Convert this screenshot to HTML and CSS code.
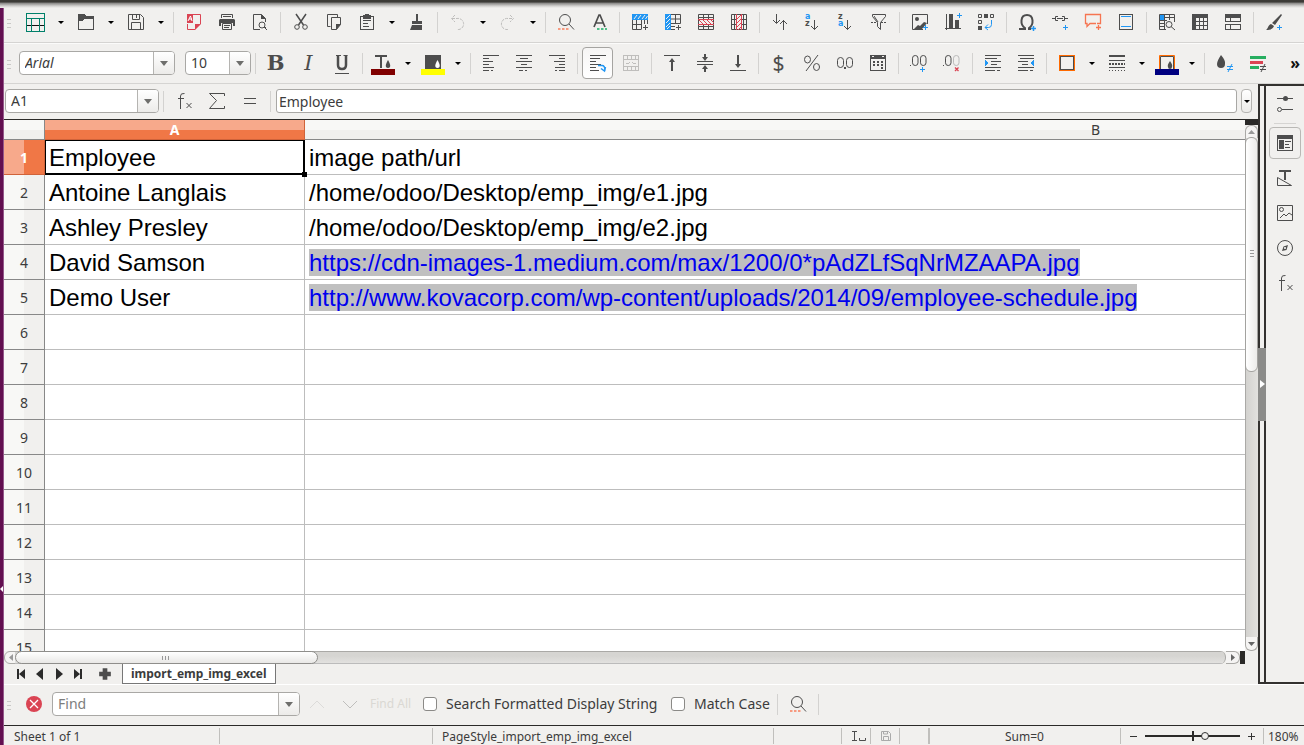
FILE: index.html
```html
<!DOCTYPE html>
<html lang="en">
<head>
<meta charset="utf-8">
<title>import_emp_img_excel</title>
<link rel="stylesheet" href="styles.css">
</head>
<body>
<div class="app">
  <div class="window-shadow"></div>
  <svg class="launcher-mark" viewBox="0 0 4 8"><path d="M4 0v8L0 4z"/></svg>

  <div class="toolbar standard" role="toolbar" aria-label="Standard">
    <span class="grip"></span>
    <span class="split"><button class="tool" aria-label="New"><svg class="icon crisp" viewBox="0 0 16 16"><path d="M-2 11.500H17" stroke="#111"/><path class="teal" d="M-1.500-.5h18v18h-18zM-2 4.500H17M3.500 5v12M11.500 5v12"/></svg></button><button class="caret" aria-label="New options"></button></span>
    <span class="split"><button class="tool" aria-label="Open"><svg class="icon crisp" viewBox="0 0 16 16"><path d="M.5 2v13.500h15v-11h-15"/><path class="solid" d="M0 0h7l1 2h8v3H6L4 7H0z"/></svg></button><button class="caret" aria-label="Open options"></button></span>
    <span class="split"><button class="tool" aria-label="Save"><svg class="icon" viewBox="0 0 16 16"><path d="M.5.5h12l3 3v12H.5zM4.500.5v5h7v-5M8.500 1v3M3.500 15.500v-7h9v7"/></svg></button><button class="caret" aria-label="Save options"></button></span>
    <span class="sep"></span>
    <button class="tool" aria-label="Export PDF"><svg class="icon" viewBox="0 0 16 16"><path d="M1.500 10v5.500H9M7 .5h7.500V10" stroke="#da4453"/><path d="M1 0h6v9H1zM9 16v-6h6z" fill="#da4453" stroke="none"/><path d="M2 7l2.500-5L6 7M3 5h3" stroke="#fff"/></svg></button>
    <button class="tool" aria-label="Print"><svg class="icon" viewBox="0 0 16 16"><path d="M2.500 4V.5h11V4M4 2.500h8"/><path class="solid" d="M1 5h14l1 1v6h-2V9H2v3H0V6z"/><path d="M3.500 9.500h9v6h-9zM5 11.500h6M5 13.500h5"/></svg></button>
    <button class="tool" aria-label="Print Preview"><svg class="icon" viewBox="0 0 16 16"><path d="M8 15.500H1.500V.5h8l4 4V8M13.500 13v2"/><path class="solid" d="M9 0v5h5z"/><circle cx="10" cy="11" r="3"/><path d="M12 13l3 3"/></svg></button>
    <span class="sep"></span>
    <button class="tool" aria-label="Cut"><svg class="icon" viewBox="0 0 16 16"><path d="M3 0l7.500 11M13 0L5.500 11" stroke-width="1.500"/><circle cx="4" cy="13" r="2.300"/><circle cx="12" cy="13" r="2.300"/></svg></button>
    <button class="tool" aria-label="Copy"><svg class="icon" viewBox="0 0 16 16"><path d="M4.500 12.500h-3V.5h10v3M5.500 3.500h9v7l-4 5h-5z"/><path class="solid" d="M10 16v-6h5z"/></svg></button>
    <span class="split"><button class="tool" aria-label="Paste"><svg class="icon crisp" viewBox="0 0 16 16"><path d="M1.500 2.500h13v13h-13zM4 6.500h8M4 9.500h5M4 12.500h6"/><path class="solid" d="M4 1h2V0h4v1h2v4H4z"/></svg></button><button class="caret" aria-label="Paste options"></button></span>
    <button class="tool" aria-label="Clone Formatting"><svg class="icon" viewBox="0 0 16 16"><path class="solid" d="M7 0h2v7h4v3H3V7h4zM3 11h10v5H1z"/></svg></button>
    <span class="sep"></span>
    <span class="split"><button class="tool faded" aria-label="Undo"><svg class="icon" viewBox="0 0 16 16"><path d="M2 4.500h5a5.500 5.500 0 0 1 2 11H7M5 1L1.500 4.500 5 8" stroke-dasharray="3 1"/></svg></button><button class="caret" aria-label="Undo history"></button></span>
    <span class="split"><button class="tool faded" aria-label="Redo"><svg class="icon" viewBox="0 0 16 16"><path d="M12 4.500H8a5.500 5.500 0 0 0-2 11h2M10 1l3.500 3.500L10 8" stroke-dasharray="3 1"/></svg></button><button class="caret" aria-label="Redo history"></button></span>
    <span class="sep"></span>
    <button class="tool" aria-label="Find and Replace"><svg class="icon" viewBox="0 0 16 16"><circle cx="7" cy="6" r="5.500"/><path d="M11 10l5 5.500"/><path class="salmon" d="M0 15h11" stroke-dasharray="2.500 1.500" stroke-width="2"/></svg></button>
    <button class="tool" aria-label="Spelling"><svg class="icon" viewBox="0 0 16 16"><path d="M3 13L8 1h1l5 12M5 9h7" stroke-width="1.700"/><path d="M6 15h10" stroke="#4fbf87" stroke-dasharray="2.500 1.500" stroke-width="2"/></svg></button>
    <span class="sep"></span>
    <button class="tool" aria-label="Insert Row"><svg class="icon" viewBox="0 0 16 16"><path d="M.5 6v9.500h9M.5 10.500h9M4.500 6v9M9.500 6v9M12.500 6v4M15.500 6v4M11 13.500h5M13.500 11v5"/><path fill="#2196f3" stroke="none" d="M0 0h16v6H0z"/><path d="M2 5l3-4M6 5l3-4M10 5l3-4M13.500 5l2-3" stroke="#f1f0ee"/></svg></button>
    <button class="tool" aria-label="Insert Column"><svg class="icon" viewBox="0 0 16 16"><path d="M6 .5h9.500v9H6M6 5h9M10.500 1v8M6 12.500h4M6 15.500h4M11 13.500h5M13.500 11v5"/><path fill="#2196f3" stroke="none" d="M0 0h6v16H0z"/><path d="M1 5l4-4M1 9l4-4M1 13l4-4M2 15l3-3" stroke="#f1f0ee"/></svg></button>
    <button class="tool" aria-label="Delete Row"><svg class="icon" viewBox="0 0 16 16"><path d="M.5.5h15v15H.5zM0 3.500h16M0 12.500h16M5.500 0v5M10.500 0v5M5.500 11v5M10.500 11v5"/><path d="M0 5.500h16M0 10.500h16M1 6l4 4M5 6l4 4M9 6l4 4M13 6l3 3" stroke="#da4453"/></svg></button>
    <button class="tool" aria-label="Delete Column"><svg class="icon" viewBox="0 0 16 16"><path d="M.5.5h15v15H.5zM3.500 0v16M12.500 0v16M0 5.500h5M0 10.500h5M11 5.500h5M11 10.500h5"/><path d="M5.500 0v16M10.500 0v16M6 5l4-4M6 9l4-4M6 13l4-4M7 16l3-3" stroke="#da4453"/></svg></button>
    <span class="sep"></span>
    <button class="tool" aria-label="Sort"><svg class="icon" viewBox="0 0 16 16"><path d="M4.500 0v9M1 6l3.500 3.500L8 6M11.500 16V6M8 10l3.500-3.500L15 10"/></svg></button>
    <button class="tool" aria-label="Sort Ascending"><svg class="icon" viewBox="0 0 16 16"><text class="mini azure" x="0" y="5">a</text><text class="mini" x="0" y="12">z</text><path d="M9.500 6v9.500M6 12l3.500 3.500L13 12"/></svg></button>
    <button class="tool" aria-label="Sort Descending"><svg class="icon" viewBox="0 0 16 16"><text class="mini" x="0" y="5">z</text><text class="mini azure" x="0" y="12">a</text><path d="M9.500 6v9.500M6 12l3.500 3.500L13 12"/></svg></button>
    <button class="tool" aria-label="AutoFilter"><svg class="icon" viewBox="0 0 16 16"><path d="M1.500.5h13v2l-5 6v7l-3-3v-4l-5-6zM3 2l4 6"/><path d="M0 8.500h5M10 8.500h6" stroke-dasharray="2 1"/></svg></button>
    <span class="sep"></span>
    <button class="tool" aria-label="Insert Image"><svg class="icon" viewBox="0 0 16 16"><path d="M11 15.500H.5V.5h15V10"/><circle class="solid" cx="5" cy="5" r="2"/><path class="solid" d="M2 15l4-4 2 1 4-4 3 1-5 6z"/><path class="blue" d="M11 13.500h5M13.500 11v5"/></svg></button>
    <button class="tool" aria-label="Insert Chart"><svg class="icon crisp" viewBox="0 0 16 16"><path d="M0 14.500h16M1.500 0v16"/><path class="solid" d="M4 0h4v15H4zM10 6h4v9h-4z"/><path class="blue" d="M12 1.500h5M14.500-1v5"/></svg></button>
    <button class="tool" aria-label="Pivot Table"><svg class="icon" viewBox="0 0 16 16"><path d="M.5.5h3v3h-3zM12.500.5h3v3h-3zM.5 6.500h3v3h-3z"/><path class="solid" d="M6 0h4v4H6zM0 12h4v4H0z"/><path class="blue" d="M13.500 6v4.500q0 3-3 3H7M10 10.500l-3 3 3 2.500"/></svg></button>
    <span class="sep"></span>
    <button class="tool" aria-label="Special Character"><svg class="icon" viewBox="0 0 16 16"><path d="M0 15h6v-1C1 11 1 1 8 1s7 10 2 13v1h2" stroke-width="2"/><path class="blue" d="M12 14.500h5M14.500 12v5" stroke-width="1.500"/></svg></button>
    <button class="tool" aria-label="Hyperlink"><svg class="icon" viewBox="0 0 16 16"><path d="M0 4.500h3M6 2.500H3.500v4H6M5 4.500h6M10 2.500h2.500v4H10M13 4.500h3"/><path class="blue" d="M11 13.500h5M13.500 11v5"/></svg></button>
    <button class="tool" aria-label="Comment"><svg class="icon" viewBox="0 0 16 16"><path d="M12 9.500h3.500v-9H.5v9H2v3l3-3h6M11 13.500h5M13.500 11v5" stroke="#f67450" stroke-width="1.300"/></svg></button>
    <button class="tool" aria-label="Headers and Footers"><svg class="icon crisp" viewBox="0 0 16 16"><path d="M1.500.5h13v15h-13z"/><path class="blue" d="M3 2.500h10M3 12.500h10"/></svg></button>
    <span class="sep"></span>
    <button class="tool" aria-label="Define Print Area"><svg class="icon" viewBox="0 0 16 16"><path d="M7 15.500H.5V.5h15V8M0 6.500h8M6 3.500h10M0 9.500h6M0 12.500h6M5.500 0v15M10.500 0v6"/><path fill="#2196f3" stroke="none" d="M1 1h4v5H1z"/><circle cx="10" cy="10.500" r="3"/><path d="M12 12.500l4 3.500"/></svg></button>
    <button class="tool" aria-label="Freeze Rows and Columns"><svg class="icon crisp" viewBox="0 0 16 16"><path class="solid" d="M0 0h16v4H4v12H0z"/><path d="M3.500 3.500h12v12h-12zM7.500 4v12M11.500 4v12M4 7.500h12M4 11.500h12"/></svg></button>
    <button class="tool" aria-label="Split Window"><svg class="icon crisp" viewBox="0 0 16 16"><path class="solid" d="M0 0h16v4H0z"/><path d="M.5.5h15v7H.5zM.5 10.500h15v5H.5zM5.500 4v4M5.500 10v6"/></svg></button>
    <span class="sep"></span>
    <button class="tool" aria-label="Show Draw Functions"><svg class="icon" viewBox="0 0 16 16"><path class="solid" d="M15 0l1 1-7 10-3-2zM5 10l3 2c-1 3-4 4-8 4 2-1 2-5 5-6z"/><path class="blue" d="M11 13.500h5M13.500 11v5"/></svg></button>
  </div>

  <div class="toolbar formatting" role="toolbar" aria-label="Formatting">
    <span class="grip"></span>
    <span class="combo font-name"><input aria-label="Font Name" value="Arial"><button aria-label="Font list"></button></span>
    <span class="combo font-size"><input aria-label="Font Size" value="10"><button aria-label="Size list"></button></span>
    <span class="sep"></span>
    <button class="tool letter bold" aria-label="Bold">B</button>
    <button class="tool letter italic" aria-label="Italic">I</button>
    <button class="tool" aria-label="Underline"><svg class="icon" viewBox="0 0 16 16"><path d="M4 0v10q0 4 4 4t4-4V0" stroke-width="2.500"/><path d="M1 18.500h14M2 .5h5M9.500 .5h4"/></svg></button>
    <span class="sep"></span>
    <span class="split"><button class="tool" aria-label="Font Color"><svg class="icon" viewBox="0 0 16 16"><path d="M0 1h12M6 1v12" stroke-width="2"/><path class="solid" d="M13 5q3 5 2 7a2.500 2.500 0 0 1-4 0q-1-2 2-7z"/><path fill="#800000" stroke="none" d="M-4 14h24v6H-4z"/></svg></button><button class="caret" aria-label="Font Color options"></button></span>
    <span class="split"><button class="tool" aria-label="Highlighting"><svg class="icon" viewBox="0 0 16 16"><path class="solid" d="M0 0h16v14H0z"/><path fill="#fff" stroke="none" d="M12.500 5q3 5 2 7a2.500 2.500 0 0 1-4 0q-1-2 2-7z"/><path fill="#ff0" stroke="none" d="M-4 14h24v6H-4z"/></svg></button><button class="caret" aria-label="Highlighting options"></button></span>
    <span class="sep"></span>
    <button class="tool" aria-label="Align Left"><svg class="icon crisp" viewBox="0 0 16 16"><path d="M0 .5h16M0 3.500h6M0 6.500h10M0 9.500h6M0 12.500h11M0 15.500h6M8 15.500h2"/></svg></button>
    <button class="tool" aria-label="Center"><svg class="icon crisp" viewBox="0 0 16 16"><path d="M0 .5h16M4 3.500h8M0 6.500h16M5 9.500h6M0 12.500h16M3 15.500h4M9 15.500h2"/></svg></button>
    <button class="tool" aria-label="Align Right"><svg class="icon crisp" viewBox="0 0 16 16"><path d="M0 .5h16M10 3.500h6M5 6.500h11M10 9.500h6M6 12.500h10M6 15.500h2M10 15.500h6"/></svg></button>
    <span class="sep"></span>
    <button class="tool pressed" aria-label="Wrap Text" aria-pressed="true"><svg class="icon" viewBox="0 0 16 16"><path d="M0 .5h16M0 3.500h10M0 6.500h6M0 9.500h11M0 12.500h6M0 15.500h9"/><path class="blue" d="M8 10.500h4q3 0 3 5M11 13.500l3.500 2.500 1-4" stroke-width="1.500"/></svg></button>
    <button class="tool faded" aria-label="Merge and Center Cells"><svg class="icon crisp" viewBox="0 0 16 16"><path d="M.5.5h15v15H.5zM0 4.500h16M0 11.500h16M4.500 0v5M8.500 0v5M12.500 0v5M4.500 11v5M8.500 11v5M12.500 11v5M3 8.500h3M10 8.500h3M6.500 7v1M9.500 7v1"/></svg></button>
    <span class="sep"></span>
    <button class="tool" aria-label="Align Top"><svg class="icon" viewBox="0 0 16 16"><path d="M0 .5h16"/><path d="M8 16V6" stroke-width="2"/><path class="solid" d="M8 3l3 4H5z"/></svg></button>
    <button class="tool" aria-label="Center Vertically"><svg class="icon" viewBox="0 0 16 16"><path d="M0 6.500h16M0 9.500h16"/><path d="M8-1v4M8 17v-4" stroke-width="2"/><path class="solid" d="M8 6L5 2h6zM8 10l3 4H5z"/></svg></button>
    <button class="tool" aria-label="Align Bottom"><svg class="icon" viewBox="0 0 16 16"><path d="M0 15.500h16"/><path d="M8 0v10" stroke-width="2"/><path class="solid" d="M8 13L5 9h6z"/></svg></button>
    <span class="sep"></span>
    <button class="tool letter currency" aria-label="Format as Currency">$</button>
    <button class="tool" aria-label="Format as Percent"><svg class="icon" viewBox="0 0 16 16"><ellipse cx="3.500" cy="4.500" rx="3" ry="3.500"/><ellipse cx="12.500" cy="12" rx="3" ry="3.500"/><path d="M14 0L2 16"/></svg></button>
    <button class="tool" aria-label="Format as Number"><svg class="icon" viewBox="0 0 16 16"><rect x=".5" y="2.500" width="6" height="10" rx="3"/><rect x="9.500" y="2.500" width="6" height="10" rx="3"/><path class="solid" d="M7 12h2v2H7z"/></svg></button>
    <button class="tool" aria-label="Format as Date"><svg class="icon crisp" viewBox="0 0 16 16"><path d="M.5.5h15v15H.5z"/><path class="solid" d="M0 0h2v2h2V0h8v2h2V0h2v4H0zM3 6h2v2H3zM7 6h2v2H7zM11 6h2v2h-2zM3 9h2v2H3zM7 9h2v2H7zM11 9h2v2h-2zM11 12h2v2h-2z"/></svg></button>
    <span class="sep"></span>
    <button class="tool" aria-label="Add Decimal Place"><svg class="icon" viewBox="0 0 16 16"><rect x="1.500" y=".5" width="5.500" height="10" rx="2.700"/><rect x="9.500" y=".5" width="5.500" height="10" rx="2.700"/><path class="solid" d="M-1 10h1v1h-1z"/><path class="blue" d="M9 14.500h5M11.500 12v5"/></svg></button>
    <button class="tool" aria-label="Delete Decimal Place"><svg class="icon" viewBox="0 0 16 16"><rect x="1.500" y=".5" width="5.500" height="10" rx="2.700"/><rect x="9.500" y=".5" width="5.500" height="10" rx="2.700" stroke="#bbb"/><path class="solid" d="M-1 10h1v1h-1z"/><path d="M11 12.500l3.500 3.500M14.500 12.500L11 16" stroke="#da4453" stroke-width="1.300"/></svg></button>
    <span class="sep"></span>
    <button class="tool" aria-label="Increase Indent"><svg class="icon crisp" viewBox="0 0 16 16"><path d="M0 .5h16M0 3.500h12M6 6.500h10M6 9.500h6M0 12.500h16M0 15.500h10M12 15.500h3"/><path fill="#2196f3" stroke="none" d="M0 5l4 3-4 3z"/></svg></button>
    <button class="tool" aria-label="Decrease Indent"><svg class="icon crisp" viewBox="0 0 16 16"><path d="M0 .5h16M2 3.500h14M0 6.500h10M4 9.500h6M0 12.500h16M0 15.500h10M12 15.500h3"/><path fill="#2196f3" stroke="none" d="M16 5l-4 3 4 3z"/></svg></button>
    <span class="sep"></span>
    <span class="split"><button class="tool" aria-label="Borders"><svg class="icon crisp" viewBox="0 0 16 16"><path d="M.5.5h15v15H.5z" stroke="#ff6a00"/><path d="M1.500 1.500h13v13h-13z"/></svg></button><button class="caret" aria-label="Borders options"></button></span>
    <span class="split"><button class="tool" aria-label="Border Style"><svg class="icon crisp" viewBox="0 0 16 16"><path d="M0 1h16" stroke-width="2"/><path d="M0 5.500h16M0 12.500h16"/><path d="M0 9h16" stroke-width="2" stroke-dasharray="2 1"/><path d="M0 15.500h16" stroke-dasharray="1 2"/></svg></button><button class="caret" aria-label="Border Style options"></button></span>
    <span class="split"><button class="tool" aria-label="Border Color"><svg class="icon" viewBox="0 0 16 16"><path d="M.5 14V.5h15V14" stroke="#ff6a00"/><path d="M1.500 14V1.500h13V14"/><path class="solid" d="M11 6q3 4 2 6a2 2 0 0 1-4 0q-1-2 2-6z"/><path fill="#000080" stroke="none" d="M-4 14h24v6H-4z"/></svg></button><button class="caret" aria-label="Border Color options"></button></span>
    <span class="sep"></span>
    <button class="tool" aria-label="Conditional Color"><svg class="icon" viewBox="0 0 16 16"><path class="solid" d="M4 0q5 6 4 9a4 4 0 0 1-8 0q0-3 4-9z"/><path class="blue" d="M10 11.500h6M10 14.500h6M15 9l-4 8"/></svg></button>
    <button class="tool" aria-label="Conditional Formatting"><svg class="icon" viewBox="0 0 16 16"><path fill="#27ae60" stroke="none" d="M0 1h16v3H0zM0 11h9v3H0z"/><path fill="#da4453" stroke="none" d="M0 6h13v3H0z"/><path d="M10 11.500h6M10 14.500h6M15 9l-4 8"/></svg></button>
    <button class="more" aria-label="More tools">»</button>
  </div>

  <main class="workspace">
    <section class="document">
      <div class="formula-bar">
        <span class="combo cell-name"><input aria-label="Name Box" value="A1"><button aria-label="Name list"></button></span>
        <span class="sep"></span>
        <button class="tool" aria-label="Function Wizard"><svg class="icon" viewBox="0 0 16 16"><path d="M4.500 16V3q0-3 4-2.500M2 5.500h6M10.500 10l5 5M15.500 10l-5 5"/></svg></button>
        <button class="tool" aria-label="Sum"><svg class="icon" viewBox="0 0 16 16"><path d="M15.500 3V.5H.5l7 7-7 8h15V13"/></svg></button>
        <button class="tool" aria-label="Formula"><svg class="icon crisp" viewBox="0 0 16 16"><path d="M2 5.500h12M2 10.500h12"/></svg></button>
        <span class="sep"></span>
        <input class="formula" aria-label="Input line" value="Employee">
        <button class="expand" aria-label="Expand Formula Bar"></button>
      </div>

      <div class="sheet-area">
        <div class="sheet">
          <table class="grid">
            <colgroup><col class="col-head"><col class="col-a"><col class="col-b"></colgroup>
            <thead><tr><th aria-label="Select all"></th><th class="current" scope="col">A</th><th scope="col">B</th></tr></thead>
            <tbody>
              <tr><th class="current" scope="row">1</th><td class="cursor">Employee</td><td>image path/url</td></tr>
              <tr><th scope="row">2</th><td>Antoine Langlais</td><td>/home/odoo/Desktop/emp_img/e1.jpg</td></tr>
              <tr><th scope="row">3</th><td>Ashley Presley</td><td>/home/odoo/Desktop/emp_img/e2.jpg</td></tr>
              <tr><th scope="row">4</th><td>David Samson</td><td><a href="https://cdn-images-1.medium.com/max/1200/0*pAdZLfSqNrMZAAPA.jpg">https://cdn-images-1.medium.com/max/1200/0*pAdZLfSqNrMZAAPA.jpg</a></td></tr>
              <tr><th scope="row">5</th><td>Demo User</td><td><a href="http://www.kovacorp.com/wp-content/uploads/2014/09/employee-schedule.jpg">http://www.kovacorp.com/wp-content/uploads/2014/09/employee-schedule.jpg</a></td></tr>
              <tr><th scope="row">6</th><td></td><td></td></tr>
              <tr><th scope="row">7</th><td></td><td></td></tr>
              <tr><th scope="row">8</th><td></td><td></td></tr>
              <tr><th scope="row">9</th><td></td><td></td></tr>
              <tr><th scope="row">10</th><td></td><td></td></tr>
              <tr><th scope="row">11</th><td></td><td></td></tr>
              <tr><th scope="row">12</th><td></td><td></td></tr>
              <tr><th scope="row">13</th><td></td><td></td></tr>
              <tr><th scope="row">14</th><td></td><td></td></tr>
              <tr><th scope="row">15</th><td></td><td></td></tr>
            </tbody>
          </table>
        </div>
        <div class="vscroll">
          <span class="v-split"></span>
          <button class="v-up" aria-label="Scroll up"><svg viewBox="0 0 7 4"><path d="M0 4l3.500-4L7 4z" fill="#999"/></svg></button>
          <div class="v-track"><div class="v-thumb"><svg viewBox="0 0 4 8"><path d="M0 .5h4M0 3.500h4M0 6.500h4" stroke="#999"/></svg></div></div>
          <button class="v-down" aria-label="Scroll down"><svg viewBox="0 0 7 4"><path d="M0 0h7L3.500 4z" fill="#666"/></svg></button>
        </div>
      </div>

      <div class="hscroll">
        <button class="h-left" aria-label="Scroll left"><svg viewBox="0 0 4 7"><path d="M4 0v7L0 3.500z" fill="#999"/></svg></button>
        <div class="h-track"><div class="h-thumb"><svg viewBox="0 0 8 4"><path d="M.5 0v4M3.500 0v4M6.500 0v4" stroke="#999"/></svg></div></div>
        <button class="h-right" aria-label="Scroll right"><svg viewBox="0 0 4 7"><path d="M0 0v7l4-3.500z" fill="#666"/></svg></button>
        <span class="h-split"></span>
      </div>

      <nav class="tabs" aria-label="Sheets">
        <button aria-label="First sheet"><svg viewBox="0 0 10 12"><path d="M1 1h2v10H1zM9 1v10L3 6z"/></svg></button>
        <button aria-label="Previous sheet"><svg viewBox="0 0 10 12"><path d="M8 0v12L1 6z"/></svg></button>
        <button aria-label="Next sheet"><svg viewBox="0 0 10 12"><path d="M2 0v12l7-6z"/></svg></button>
        <button aria-label="Last sheet"><svg viewBox="0 0 10 12"><path d="M7 1h2v10H7zM1 1v10l6-5z"/></svg></button>
        <button class="add" aria-label="Add sheet"><svg viewBox="0 0 12 12"><path d="M4 1h4v3h3v4H8v3H4V8H1V4h3z"/></svg></button>
        <button class="tab">import_emp_img_excel</button>
      </nav>
    </section>

    <button class="deck-splitter" aria-label="Hide sidebar"><span><svg viewBox="0 0 5 8"><path d="M0 0v8l5-4z"/></svg></span></button>

    <aside class="sidebar" aria-label="Sidebar">
      <button aria-label="Sidebar Settings"><svg class="icon" viewBox="0 0 16 16"><path d="M0 2.500h16M5 13.500h11"/><circle class="solid" cx="8.500" cy="2.500" r="2.500"/><circle cx="2.500" cy="13.500" r="2"/></svg></button>
      <span class="side-sep"></span>
      <button class="active" aria-label="Properties"><svg class="icon crisp" viewBox="0 0 16 16"><path d="M.5.5h15v15H.5zM8 6.500h6M8 9.500h4M8 12.500h5"/><path class="solid" d="M0 0h16v4H0zM2 5h5v9H2z"/></svg></button>
      <button aria-label="Styles"><svg class="icon" viewBox="0 0 16 16"><path d="M2 1h12M8 1v9" stroke-width="2"/><path d="M.5 7.500v8h14z"/></svg></button>
      <button aria-label="Gallery"><svg class="icon" viewBox="0 0 16 16"><path d="M.5.5h15v15H.5zM3 13l4-4 2 2 3-3 3 2"/><circle cx="4.500" cy="4.500" r="2"/></svg></button>
      <button aria-label="Navigator"><svg class="icon" viewBox="0 0 16 16"><circle cx="8" cy="8" r="7.500"/><path class="solid" d="M11 5l-1.500 5L5 11l1.500-4.500z"/><circle cx="8" cy="8" r="1" fill="#fff" stroke="none"/></svg></button>
      <button aria-label="Functions"><svg class="icon" viewBox="0 0 16 16"><path d="M4.500 16V3q0-3 4-2.500M2 5.500h6M10.500 10l5 5M15.500 10l-5 5"/></svg></button>
    </aside>
  </main>

  <form class="find-bar">
    <span class="grip"></span>
    <button type="button" class="close" aria-label="Close Find Bar"><svg class="icon" viewBox="0 0 16 16"><circle cx="8" cy="8" r="8" fill="#da4453" stroke="none"/><path d="M4 4l8 8M12 4l-8 8" stroke="#fff" stroke-width="1.300"/></svg></button>
    <span class="combo find"><input aria-label="Find" placeholder="Find"><button type="button" aria-label="Find history"></button></span>
    <button type="button" class="tool ghost" aria-label="Find Previous"><svg class="icon" viewBox="0 0 16 16"><path d="M1 12l7-7 7 7"/></svg></button>
    <button type="button" class="tool faded" aria-label="Find Next"><svg class="icon" viewBox="0 0 16 16"><path d="M1 5l7 7 7-7"/></svg></button>
    <button type="button" class="find-all">Find All</button>
    <input type="checkbox" id="formatted"><label for="formatted">Search Formatted Display String</label>
    <input type="checkbox" id="match"><label for="match" class="match">Match Case</label>
    <span class="sep"></span>
    <button type="button" class="tool" aria-label="Find and Replace dialog"><svg class="icon" viewBox="0 0 16 16"><circle cx="7" cy="6" r="5.500"/><path d="M11 10l5 5.500"/><path class="salmon" d="M0 15h11" stroke-dasharray="2.500 1.500" stroke-width="2"/></svg></button>
    <span class="sep"></span>
  </form>

  <footer class="status">
    <span class="cell first">Sheet 1 of 1</span>
    <span class="cell empty"></span>
    <span class="cell">PageStyle_import_emp_img_excel</span>
    <span class="cell empty"></span>
    <span class="cell"><svg class="small" viewBox="0 0 16 12"><path d="M1 1.500h5M1 10.500h5M3.500 1v10M8.500 8v2.500h6V8"/></svg></span>
    <span class="cell"><svg class="small pale" viewBox="0 0 12 12"><path d="M1.500 1.500h7l2 2v7h-9zM3.500 1v3h4V1M3.500 10V6.500h5V10"/></svg></span>
    <span class="cell empty"></span>
    <span class="cell empty"></span>
    <span class="cell sum">Sum=0</span>
    <span class="cell zoom"><button aria-label="Zoom out"><svg viewBox="0 0 7 7"><path d="M0 3.500h7"/></svg></button><input type="range" aria-label="Zoom" min="0" max="100" value="64"><button aria-label="Zoom in"><svg viewBox="0 0 7 7"><path d="M0 3.500h7M3.500 0v7"/></svg></button></span>
    <span class="cell percent">180%</span>
  </footer>
</div>
</body>
</html>
```

FILE: styles.css
```css
* { box-sizing: border-box; }

html, body { height: 100%; }

body {
  margin: 0;
  overflow: hidden;
  font: 14px/20px "Noto Sans", "Open Sans", sans-serif;
  color: #3c3c3c;
  background: #f1f0ee;
}

button {
  margin: 0;
  padding: 0;
  border: 0;
  background: none;
  font: inherit;
  color: inherit;
}

input { font: inherit; color: inherit; }

svg { display: block; }

.app {
  position: relative;
  display: flex;
  flex-direction: column;
  height: 100%;
  border-left: 3px solid #620f50;
  box-shadow: inset 1px 0 #94588a;
  padding-left: 1px;
}

.window-shadow {
  position: absolute;
  top: 0;
  left: -3px;
  right: 0;
  height: 8px;
  background: linear-gradient(#3c3b37 0 25%, #8a8987 40%, #d2d1cf 75%, #f1f0ee);
}

.launcher-mark {
  position: absolute;
  left: -3px;
  top: 585px;
  width: 3px;
  height: 8px;
  fill: #fff;
}

/* Icons */
.icon {
  width: 16px;
  height: 16px;
  overflow: visible;
  fill: none;
  stroke: #4d4d4d;
}
.crisp { shape-rendering: crispEdges; }
.solid { fill: #4d4d4d; stroke: none; }
.blue { stroke: #2196f3; }
.teal { stroke: #00806a; }
.salmon { stroke: #f79a80; }
.mini { font: bold 8px "DejaVu Sans", sans-serif; fill: #4d4d4d; stroke: none; }
.azure { fill: #2196f3; }

/* Toolbars */
.toolbar {
  display: flex;
  align-items: center;
  flex: none;
  border-bottom: 1px solid #d5d4d2;
}
.standard { height: 43px; padding-top: 2px; }
.formatting {
  height: 41px;
  padding-bottom: 1px;
  border-top: 1px solid #fbfbfa;
}

.grip {
  flex: none;
  width: 4px;
  height: 9px;
  margin: 2px 8px 0 3px;
  background: repeating-linear-gradient(#c9c8c6 0 1px, transparent 1px 4px);
}

.split { display: flex; flex: none; }
.tool {
  flex: none;
  width: 33px;
  height: 32px;
  padding-left: 9px;
}
.split .caret { width: 17px; display: flex; align-items: center; padding-left: 6px; }
.caret::before, .expand::before {
  content: "";
  border: 3px solid transparent;
  border-top-color: #000;
  border-bottom: 0;
}

.faded { opacity: .3; }
.ghost { opacity: .12; }

.sep {
  flex: none;
  width: 8px;
  height: 21px;
  background: linear-gradient(90deg, transparent 4px, #d3d2d0 4px 5px, transparent 5px);
}

.letter { padding-left: 0; font-size: 21px; line-height: 32px; color: #4d4d4d; }
.bold { font-family: "DejaVu Serif", serif; font-weight: bold; }
.italic { font-family: "DejaVu Serif", serif; font-style: italic; }

.pressed {
  width: 31px;
  margin: 0 1px;
  padding-left: 7px;
  border: 1px solid #a5a4a1;
  border-radius: 4px;
  background: linear-gradient(#f6f5f4, #fff);
}

.more { margin-left: auto; padding-right: 4px; font-size: 16px; font-weight: bold; color: #111; }

/* Editable drop-downs */
.combo {
  display: flex;
  flex: none;
  height: 24px;
  border: 1px solid #a9a8a5;
  border-radius: 4px;
  background: #fff;
  overflow: hidden;
}
.combo input {
  flex: 1;
  min-width: 0;
  padding: 0 5px;
  border: 0;
  outline: 0;
  background: none;
}
.combo button {
  display: flex;
  align-items: center;
  justify-content: center;
  width: 21px;
  border-left: 1px solid #b5b4b1;
  background: linear-gradient(#fff, #ecebe9);
}
.combo button::before {
  content: "";
  border: 4px solid transparent;
  border-top: 5px solid #6e6e6c;
  border-bottom: 0;
}
.font-name { width: 156px; margin-right: 10px; font-style: italic; }
.font-size { width: 66px; }
.cell-name { width: 154px; margin-left: 1px; }

/* Workspace */
.workspace { display: flex; flex: 1; min-height: 0; }
.document { display: flex; flex-direction: column; flex: 1; min-width: 0; }

.formula-bar {
  display: flex;
  align-items: center;
  flex: none;
  height: 36px;
  padding-bottom: 1px;
  border-bottom: 1px solid #2b2a28;
}
.formula {
  flex: 1;
  min-width: 0;
  height: 24px;
  margin-left: 2px;
  padding: 0 2px;
  border: 1px solid #a9a8a5;
  border-radius: 3px;
  background: #fff;
  outline: 0;
}
.expand {
  display: flex;
  align-items: center;
  justify-content: center;
  width: 11px;
  height: 24px;
  margin: 0 6px 0 4px;
  border: 1px solid #b5b4b1;
  border-radius: 4px;
  background: linear-gradient(#fff, #ecebe9);
}

.sheet-area { display: flex; flex: 1; min-height: 0; }
.sheet { flex: 1; min-width: 0; overflow: hidden; background: #fff; }

.grid { width: 1883px; table-layout: fixed; border-collapse: separate; border-spacing: 0; }
.col-head { width: 41px; }
.col-a { width: 260px; }
.col-b { width: 1582px; }

.grid th {
  padding: 0;
  font-weight: normal;
  font-size: 14px;
  border-right: 1px solid #888;
  border-bottom: 1px solid #888;
}
.grid thead th {
  height: 20px;
  line-height: 19px;
  background: linear-gradient(#f8f8f6 10px, #f1f0ee 10px);
}
.grid tbody th {
  height: 35px;
  padding-top: 2px;
  background: linear-gradient(90deg, #f8f8f6 20px, #f1f0ee 20px);
}
.grid th.current { font-weight: bold; color: #fff; border-color: #d0633a; }
.grid thead th.current { background: linear-gradient(#f7a98b 10px, #f07746 10px); }
.grid tbody th.current { background: linear-gradient(90deg, #f7a98b 20px, #f07746 20px); }

.grid td {
  height: 35px;
  padding: 2px 4px 0;
  font: 24px/28px "Liberation Sans", Arial, sans-serif;
  color: #000;
  white-space: nowrap;
  border-right: 1px solid #bdbdbd;
  border-bottom: 1px solid #bdbdbd;
}
.grid a { color: #00e; background: #c0c0c0; text-decoration: none; }

.grid .cursor { position: relative; z-index: 1; }
.cursor::before {
  content: "";
  position: absolute;
  inset: 0 -1px -1px 0;
  border: solid #000;
  border-width: 1px 2px 2px 1px;
}
.cursor::after {
  content: "";
  position: absolute;
  right: -3px;
  bottom: -3px;
  width: 5px;
  height: 5px;
  background: #000;
}

/* Scroll bars */
.vscroll { display: flex; flex-direction: column; width: 13px; background: #f1f0ee; }
.vscroll button, .hscroll button {
  display: flex;
  align-items: center;
  justify-content: center;
  border: 1px solid #aaa9a6;
  background: #f5f4f3;
}
.v-split { height: 5px; background: #2b2a28; }
.vscroll .v-up { height: 13px; border-radius: 6px 6px 0 0; border-bottom: 0; }
.vscroll .v-down { height: 14px; border-top: 0; border-radius: 0 0 6px 6px; }
.vscroll button svg { width: 7px; height: 4px; }
.v-track { flex: 1; background: linear-gradient(90deg, #aaa9a6 1px, #d3d2cf 1px, #e2e1de); }
.v-thumb {
  display: flex;
  align-items: center;
  justify-content: center;
  height: 47%;
  margin-top: -1px;
  border: 1px solid #a3a29f;
  border-radius: 6px;
  background: linear-gradient(90deg, #fff, #ecebe9);
}
.v-thumb svg { width: 4px; height: 8px; }

.hscroll { display: flex; flex: none; height: 13px; margin-right: 13px; background: #f1f0ee; }
.hscroll .h-left { width: 13px; margin-right: -2px; border-radius: 6px 0 0 6px; }
.hscroll .h-right { width: 14px; border-radius: 0 6px 6px 0; border-left: 0; }
.hscroll button svg { width: 4px; height: 7px; }
.h-track {
  flex: 1;
  border-right: 1px solid #aaa9a6;
  border-radius: 0 6px 6px 0;
  background: linear-gradient(#aaa9a6 1px, #d6d5d2 1px 5px, #e2e1df 12px, #bbb 12px);
}
.h-thumb {
  display: flex;
  align-items: center;
  justify-content: center;
  width: 25%;
  height: 13px;
  border: 1px solid #8f8e8b;
  border-radius: 7px;
  background: linear-gradient(#fff, #e9e8e6);
}
.h-thumb svg { width: 8px; height: 4px; }
.h-split { width: 5px; background: #2b2a28; }

/* Sheet tabs */
.tabs { display: flex; flex: none; height: 20px; padding-left: 12px; }
.tabs button { display: flex; align-items: center; }
.tabs svg { width: 10px; height: 12px; margin-right: 9px; fill: #2b2b2b; }
.tabs .add svg { width: 14px; height: 14px; margin: 0 10px 0 6px; fill: #4d4d4d; }
.tabs .tab {
  height: 20px;
  padding: 0 8px;
  border: 1px solid #777;
  border-top: 0;
  background: #fff;
  font-size: 12px;
  font-weight: bold;
}

/* Sidebar */
.deck-splitter {
  display: flex;
  align-items: center;
  flex: none;
  width: 8px;
  border: 2px solid #33312f;
  background: #f1f0ee;
}
.deck-splitter span {
  display: flex;
  align-items: center;
  flex: none;
  width: 8px;
  height: 73px;
  margin-left: -2px;
  padding-left: 2px;
  background: #8b8b89;
}
.deck-splitter svg { width: 5px; height: 8px; fill: #fff; }
.sidebar {
  display: flex;
  flex-direction: column;
  flex: none;
  gap: 3px;
  width: 38px;
  padding: 2px 3px;
  border: solid #33312f;
  border-width: 2px 0;
}
.sidebar button {
  display: flex;
  align-items: center;
  justify-content: center;
  width: 32px;
  height: 32px;
}
.sidebar .active { border: 1px solid #b9b8b5; border-radius: 4px; }
.side-sep { height: 1px; margin: 0 5px; background: #d5d4d2; }

/* Find bar */
.find-bar {
  display: flex;
  align-items: center;
  flex: none;
  height: 42px;
  padding-bottom: 2px;
  border-top: 1px solid #fff;
  border-bottom: 1px solid #2b2a28;
}
.close { margin: 0 10px 0 7px; }
.find { width: 248px; }
.find input::placeholder { color: #7d7d7d; opacity: 1; }
.find-all { width: 40px; margin-left: 4px; font-size: 12px; color: #dad8d3; white-space: nowrap; }
.find-bar input[type="checkbox"] {
  appearance: none;
  flex: none;
  width: 14px;
  height: 14px;
  margin: 0 9px 0 13px;
  border: 1px solid #8b8a87;
  border-radius: 3px;
  background: #fff;
}
.find-bar label { width: 216px; white-space: nowrap; }
.find-bar label + input[type="checkbox"] { margin-left: 9px; }
.find-bar .match { width: 79px; }

/* Status bar */
.status {
  display: grid;
  grid-template-columns: 216px 213px 341px 68px 29px 29px 29px 0 1fr 143px 40px;
  flex: none;
  height: 19px;
  padding-top: 2px;
  font-size: 12px;
  line-height: 17px;
  white-space: nowrap;
}
.cell {
  display: flex;
  align-items: center;
  padding-left: 9px;
  height: 16px;
  border-right: 1px solid #c0bfbc;
}
.first { padding-left: 10px; }
.empty { padding: 0; }
.sum { justify-content: center; padding: 0; }
.percent { padding-left: 4px; border: 0; }
.small { width: 16px; height: 12px; fill: none; stroke: #4d4d4d; }
.pale { width: 12px; stroke: #aaa; }
.zoom { padding-right: 8px; }
.zoom svg { width: 7px; height: 7px; stroke: #333; }
.zoom input {
  appearance: none;
  flex: 1;
  min-width: 0;
  height: 10px;
  margin: 0 8px;
  background:
    linear-gradient(#2b2a28, #2b2a28) center / 2px 10px no-repeat,
    linear-gradient(#2b2a28, #2b2a28) center / 100% 2px no-repeat;
}
.zoom input::-webkit-slider-thumb {
  appearance: none;
  width: 8px;
  height: 8px;
  border: 1px solid #333;
  border-radius: 50%;
  background: #f1f0ee;
}
```
